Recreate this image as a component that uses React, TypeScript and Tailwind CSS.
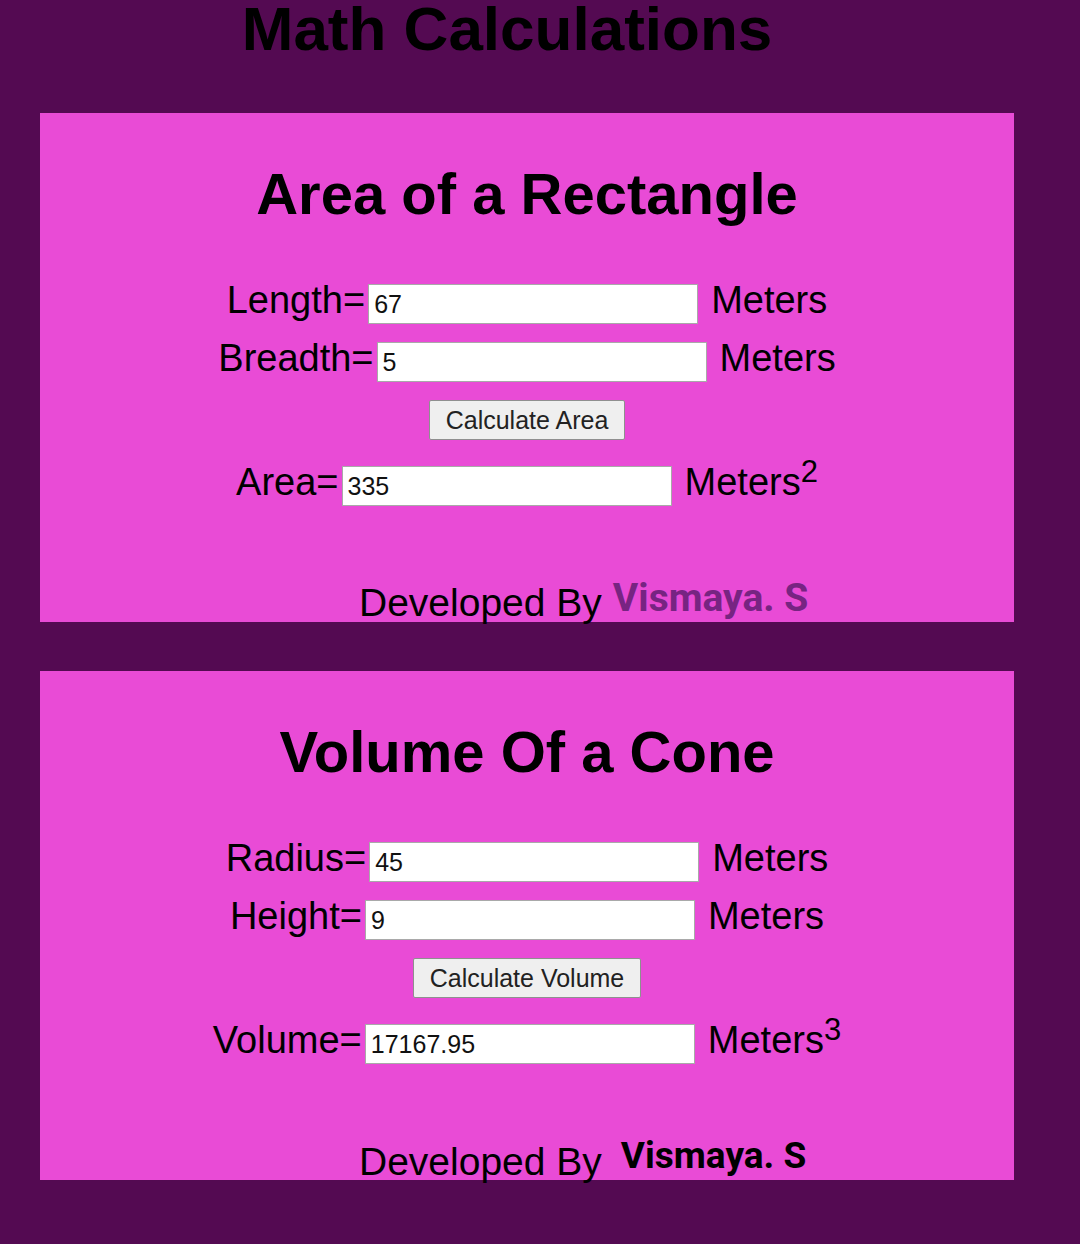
import React from 'react';

const arial = { fontFamily: '"Liberation Sans", Arial, sans-serif' };

interface RowProps {
  label: string;
  value: string;
  sup?: string;
}

function Row({ label, value, sup }: RowProps) {
  return (
    <div className="flex h-[40px] items-start justify-center text-[38px] leading-[32px] text-black">
      <span className="whitespace-nowrap">{label}</span>
      <input
        readOnly
        value={value}
        className="ml-[3px] h-[40px] w-[330px] shrink-0 border border-[#a9a9a9] bg-white px-[5px] text-[25px] text-[#111] outline-none"
        style={arial}
      />
      <span className="ml-[13px] whitespace-nowrap">
        Meters
        {sup && <sup className="top-[-13px] text-[31px]">{sup}</sup>}
      </span>
    </div>
  );
}

interface CardProps {
  title: string;
  rows: { label: string; value: string }[];
  button: string;
  result: { label: string; value: string; sup: string };
  nameClass: string;
}

function Card({ title, rows, button, result, nameClass }: CardProps) {
  return (
    <div className="ml-[40px] flex h-[509px] w-[974px] flex-col bg-[#e94bd6]" style={arial}>
      <h2 className="mt-[52px] h-[58px] text-center text-[58px] font-bold leading-[58px] text-black">
        {title}
      </h2>
      <div className="mt-[61px] flex flex-col gap-[18px]">
        {rows.map((r) => (
          <Row key={r.label} label={r.label} value={r.value} />
        ))}
      </div>
      <div className="mt-[18px] flex justify-center">
        <button className="h-[40px] rounded-[2px] border border-[#8f8f8f] bg-[#efefef] px-[16px] text-[25px] leading-none text-[#222]">
          {button}
        </button>
      </div>
      <div className="mt-[26px]">
        <Row label={result.label} value={result.value} sup={result.sup} />
      </div>
      <div className="mt-[72px] h-[40px] whitespace-nowrap pl-[319px] text-[39px] leading-[40px] text-black">
        Developed By
        <span
          className={nameClass}
          style={{ fontFamily: 'Roboto, "Liberation Sans", sans-serif' }}
        >
          Vismaya. S
        </span>
      </div>
    </div>
  );
}

export default function App() {
  return (
    <div className="min-h-[1244px] w-full overflow-hidden bg-[#540a52]" style={arial}>
      <div className="h-[113px] w-[1014px] pt-[1px]">
        <h1 className="text-center text-[62px] font-bold leading-[56px] text-black">
          Math Calculations
        </h1>
      </div>
      <Card
        title="Area of a Rectangle"
        rows={[
          { label: 'Length=', value: '67' },
          { label: 'Breadth=', value: '5' },
        ]}
        button="Calculate Area"
        result={{ label: 'Area=', value: '335', sup: '2' }}
        nameClass="ml-[11px] align-[5px] text-[39px] font-bold text-[#772482]"
      />
      <div className="h-[49px]" />
      <Card
        title="Volume Of a Cone"
        rows={[
          { label: 'Radius=', value: '45' },
          { label: 'Height=', value: '9' },
        ]}
        button="Calculate Volume"
        result={{ label: 'Volume=', value: '17167.95', sup: '3' }}
        nameClass="ml-[19px] align-[7px] text-[37px] font-bold text-black"
      />
    </div>
  );
}
